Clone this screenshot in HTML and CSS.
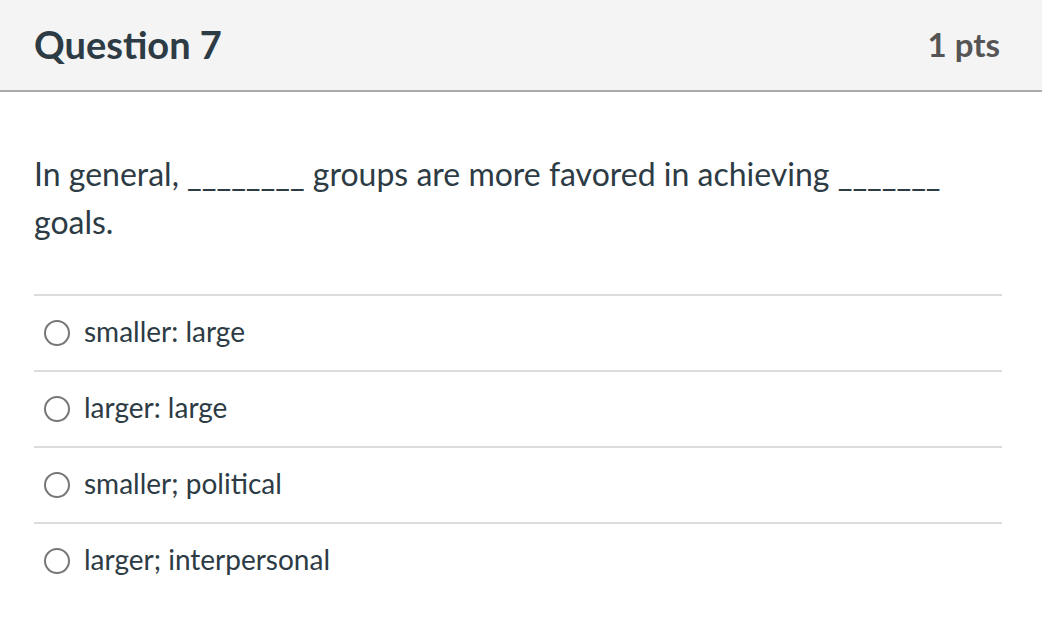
FILE: index.html
```html
<!DOCTYPE html>
<html lang="en">

<head>
    <meta charset="UTF-8">
    <meta name="viewport" content="width=device-width, initial-scale=1.0">
    <title>Quiz - Question 7</title>
    <link rel="stylesheet" href="styles.css">
</head>

<body>

    <div class="question">
        <header class="question-header">
            <h2>Question 7</h2>
            <span class="points">1 pts</span>
        </header>

        <div class="question-body">
            <p class="question-text">In general, ________ groups are more favored in achieving _______ goals.</p>

            <ul class="answers">
                <li><label><input type="radio" name="q7"><span>smaller: large</span></label></li>
                <li><label><input type="radio" name="q7"><span>larger: large</span></label></li>
                <li><label><input type="radio" name="q7"><span>smaller; political</span></label></li>
                <li><label><input type="radio" name="q7"><span>larger; interpersonal</span></label></li>
            </ul>
        </div>
    </div>

</body>

</html>
```

FILE: styles.css
```css
* {
    margin: 0;
    padding: 0;
    box-sizing: border-box;
    font-family: Lato, "Open Sans", sans-serif;
}

body {
    background: #fff;
    color: #2d3b45;
}

.question-header {
    display: flex;
    justify-content: space-between;
    align-items: center;
    height: 92px;
    padding: 0 42px 2px 34px;
    background: #f4f4f4;
    border-bottom: 2px solid #aaa;
}

.question-header h2 {
    font-size: 38px;
    font-weight: 700;
    color: #2d3b45;
}

.points {
    font-size: 33px;
    font-weight: 700;
    color: #555;
}

.question-body {
    padding: 0 40px 0 34px;
}

.question-text {
    font-size: 32px;
    line-height: 48px;
    padding: 58px 0 48px;
}

.answers {
    list-style: none;
}

.answers li {
    border-top: 2px solid #ddd;
    height: 76px;
}

.answers label {
    display: flex;
    align-items: center;
    gap: 14px;
    height: 74px;
    padding-left: 10px;
    font-size: 28px;
    cursor: pointer;
}

.answers label span {
    margin-bottom: 5px;
}

.answers input {
    appearance: none;
    width: 26px;
    height: 26px;
    border: 2px solid #777;
    border-radius: 50%;
    background: #fff;
    flex-shrink: 0;
}
```
